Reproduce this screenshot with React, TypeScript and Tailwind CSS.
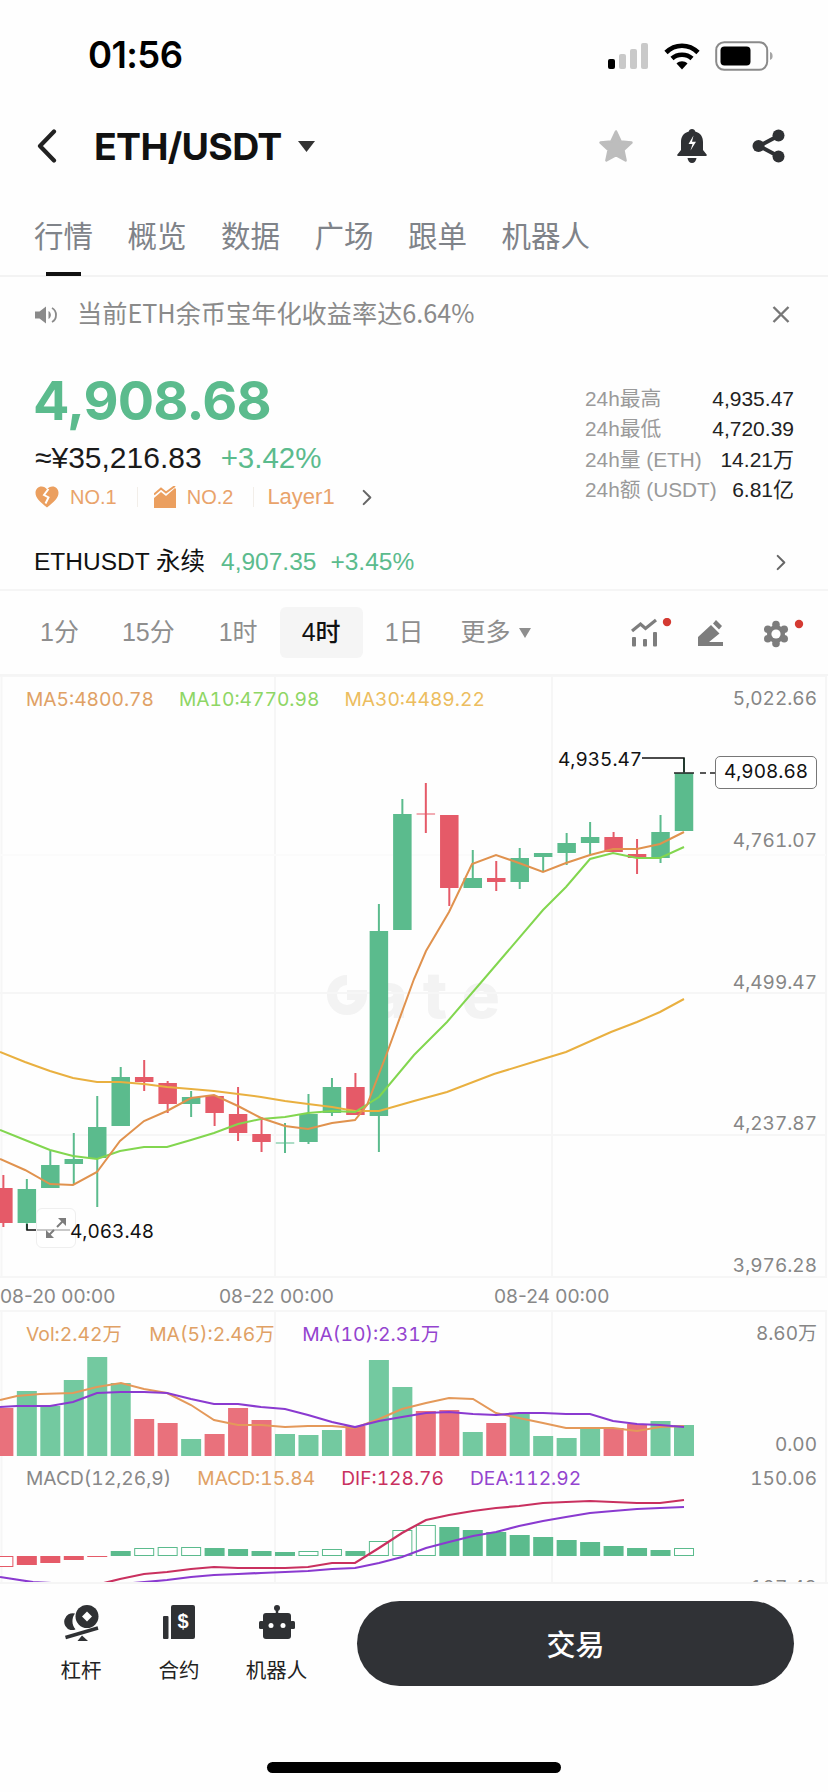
import React from "react";

const G = "#5bbb8d";
const R = "#e55a68";
const XS = (i: number) => 684 - 23.47 * i;

const candles: [number, number, number, number, number][] = [
  [1, 773, 831, 758, 831], [1, 832, 858, 815, 863], [0, 854, 858, 839, 874], [0, 837, 852, 832, 852],
  [1, 837, 843, 822, 855], [1, 843, 853, 833, 865], [1, 853, 857, 853, 872], [1, 858, 882, 848, 889],
  [0, 878, 882, 861, 891], [1, 878, 888, 850, 888], [0, 815, 888, 815, 906], [0, 813.5, 814.5, 783, 833],
  [1, 814, 930, 799, 930], [1, 931, 1116, 904, 1152], [0, 1087, 1115, 1073, 1115], [1, 1087, 1113, 1078, 1116],
  [1, 1114, 1142, 1094, 1144], [1, 1142.5, 1143.5, 1123, 1153], [0, 1134, 1142, 1117, 1152], [0, 1114, 1133, 1087, 1141],
  [0, 1096, 1113, 1096, 1126], [1, 1097, 1104, 1091, 1117], [0, 1083, 1104, 1081, 1113], [0, 1077, 1082, 1060, 1091],
  [1, 1077, 1126, 1067, 1126], [1, 1127, 1158, 1096, 1207], [1, 1159, 1164, 1133, 1184], [1, 1165, 1188, 1151, 1188],
  [1, 1189, 1223, 1179, 1230], [0, 1188, 1223, 1175, 1227],
];

const ma5 = "0,1159 25,1170 50,1184 73,1185 97,1172 120,1141 144,1121 167,1111 191,1098 214,1095 238,1106 261,1118 285,1126 308,1129 332,1123 355,1120 367,1105 387,1053 414,979 426,951 449,912 472,864 496,855 519,863 543,872 566,863 590,855 613,849 637,849 660,844 684,832";
const ma10 = "0,1130 25,1140 50,1150 73,1156 97,1159 120,1151 144,1147 167,1147 191,1140 214,1133 238,1124 261,1119 285,1117 308,1113 332,1111 355,1112 379,1097 414,1055 447,1022 484,979 543,910 566,887 590,859 613,853 637,858 660,858 684,847";
const ma30 = "0,1052 25,1062 50,1071 73,1078 97,1082 120,1082 144,1084 167,1087 191,1089 214,1091 238,1094 261,1097 285,1101 308,1104 332,1107 355,1111 379,1111 414,1101 447,1092 494,1074 543,1059 566,1052 611,1032 637,1022 660,1012 684,999";

const vol: [number, number][] = [
  [1, 1425], [1, 1421], [0, 1424], [0, 1428], [1, 1428], [1, 1438], [1, 1436], [1, 1414], [0, 1423], [1, 1432],
  [0, 1410], [0, 1411], [1, 1387], [1, 1360], [0, 1426], [1, 1430], [1, 1435], [1, 1434], [0, 1420], [0, 1408],
  [0, 1434], [1, 1439], [0, 1423], [0, 1419], [1, 1383], [1, 1357], [1, 1380], [1, 1406], [1, 1391], [0, 1408],
];
const volMa5 = "0,1400 17,1396 40,1394 73,1393 97,1387 121,1383 144,1389 167,1393 191,1405 214,1420 238,1425 261,1425 285,1427 308,1426 332,1426 355,1428 379,1419 402,1409 426,1403 449,1398 473,1399 496,1413 519,1418 543,1423 566,1428 590,1428 613,1428 637,1431 660,1427 684,1426";
const volMa10 = "0,1407 17,1406 50,1406 73,1402 97,1393 121,1392 144,1392 167,1393 191,1399 214,1404 238,1404 261,1407 285,1409 308,1415 332,1422 355,1427 379,1421 402,1417 426,1413 449,1412 473,1414 496,1415 519,1413 543,1413 566,1414 590,1414 613,1421 637,1424 660,1425 684,1427";

const macd: [number, number, boolean][] = [
  [1, 1548, true], [1, 1550, false], [1, 1548, false], [1, 1546, false], [1, 1542, false], [1, 1540, false],
  [1, 1537, false], [1, 1535, false], [1, 1532, false], [1, 1530, false], [1, 1527, false], [1, 1525, true],
  [1, 1530, true], [1, 1541, true], [1, 1551, false], [1, 1549, true], [1, 1551, true], [1, 1552, false],
  [1, 1551, false], [1, 1549, false], [1, 1548, false], [1, 1547, true], [1, 1547, true], [1, 1548, true],
  [1, 1551, false], [0, 1557, false], [0, 1560, false], [0, 1563, false], [0, 1565, false], [0, 1567, true],
];
const dif = "100,1584 120,1579 144,1574 167,1572 191,1569 214,1567 238,1568 261,1568 285,1568 308,1567 332,1563 355,1563 379,1548 402,1533 426,1520 449,1515 473,1511 496,1508 519,1506 543,1503 566,1502 590,1501 613,1502 637,1503 660,1503 684,1500";
const dea = "0,1577 33,1582 67,1584 97,1585 133,1583 167,1580 191,1577 214,1575 238,1574 261,1573 285,1572 308,1571 332,1569 355,1568 379,1563 402,1557 426,1548 449,1542 473,1536 496,1532 519,1526 543,1521 566,1517 590,1513 613,1511 637,1509 660,1508 684,1507";

const zh = "font-['Noto_Sans_CJK_SC','Noto_Sans',sans-serif]";
const num = "font-['Inter','Noto_Sans_CJK_SC',sans-serif] tabular-nums";

function Chevron({ className }: { className: string }) {
  return (
    <svg viewBox="0 0 12 18" className={className} fill="none" stroke="currentColor" strokeWidth="2.2" strokeLinecap="round" strokeLinejoin="round">
      <path d="M2.5 2 9.5 9 2.5 16" />
    </svg>
  );
}

function StatusBar() {
  return (
    <div className="flex h-[100px] items-start justify-between pt-[35px] pr-[55px] pl-[88px]">
      <span className="font-['Inter',sans-serif] text-[36.5px] leading-[40px] font-semibold tracking-[-0.6px] text-black">01:56</span>
      <div className="flex items-center pt-[6px]">
        <svg width="41" height="26" viewBox="0 0 41 26">
          <rect x="0" y="16" width="7" height="10" rx="2" fill="#000" />
          <rect x="11" y="11" width="7" height="15" rx="2" fill="#c9c9c9" />
          <rect x="22" y="6" width="7" height="20" rx="2" fill="#c9c9c9" />
          <rect x="33" y="0" width="7" height="26" rx="2" fill="#c9c9c9" />
        </svg>
        <svg width="36" height="28" viewBox="0 0 36 28" className="ml-[15px]">
          <path d="M2 10.5C11 1.5 25 1.5 34 10.5" fill="none" stroke="#000" strokeWidth="4.6" />
          <path d="M8 16.5C13.5 11.5 22.5 11.5 28 16.5" fill="none" stroke="#000" strokeWidth="4.6" />
          <path d="M12.5 21.5C15.5 18.4 20.5 18.4 23.5 21.5L18 27.5Z" fill="#000" />
        </svg>
        <svg width="58" height="30" viewBox="0 0 58 30" className="ml-[15px]">
          <rect x="1.2" y="1.2" width="51" height="27.6" rx="8" fill="none" stroke="#8a8a8a" strokeWidth="2" />
          <rect x="5.5" y="5.5" width="30" height="19" rx="4" fill="#000" />
          <path d="M55 11c2 .6 2.6 2.2 2.6 4s-.6 3.400-2.600 4z" fill="#a5a5a5" />
        </svg>
      </div>
    </div>
  );
}

function Header() {
  return (
    <div className="flex h-[92px] items-center justify-between pr-[43px] pl-[37px]">
      <div className="flex items-center">
        <svg width="20" height="34" viewBox="0 0 20 34" fill="none" stroke="#222" strokeWidth="4.2" strokeLinecap="round" strokeLinejoin="round">
          <path d="M17 2.500 3 17l14 14.500" />
        </svg>
        <span className="mt-[2px] ml-[37px] font-['Inter',sans-serif] text-[37.5px] leading-[42px] font-bold tracking-[-0.7px] text-[#111]">ETH/USDT</span>
        <svg width="17" height="11" viewBox="0 0 17 11" className="ml-[16px]"><path d="M0 0h17L8.500 11z" fill="#333" /></svg>
      </div>
      <div className="flex items-center">
        <svg width="36" height="34" viewBox="0 0 36 34">
          <path d="M18 2.500 22.600 12.400 33.500 13.600 25.400 21 27.600 31.500 18 26.200 8.400 31.500 10.600 21 2.500 13.600 13.400 12.400Z" fill="#bdbdbd" stroke="#bdbdbd" strokeWidth="2.500" strokeLinejoin="round" />
        </svg>
        <svg width="30" height="34" viewBox="0 0 30 34" className="ml-[43px]">
          <path d="M15 0c1.800 0 3 1.200 3.200 2.600C23.500 4 26 8 26 13v8l3.600 4.400c.5.800 0 1.600-.8 1.600H1.200c-.8 0-1.300-.8-.8-1.600L4 21v-8C4 8 6.500 4 11.800 2.600 12 1.200 13.200 0 15 0Z" fill="#2f3134" />
          <path d="M16.500 6.500 11.500 15h4l-2 6.500 5.500-8.800h-4l1.500-6.200Z" fill="#fff" />
          <path d="M10.500 29h9c-.4 3-2.200 5-4.500 5s-4.100-2-4.500-5Z" fill="#2f3134" />
        </svg>
        <svg width="33" height="34" viewBox="0 0 33 34" className="ml-[45px]">
          <path d="M26 7 7 17l19 10" fill="none" stroke="#2f3134" strokeWidth="4" />
          <circle cx="26.500" cy="6.500" r="6" fill="#2f3134" />
          <circle cx="6.500" cy="17" r="6" fill="#2f3134" />
          <circle cx="26.500" cy="27.500" r="6" fill="#2f3134" />
        </svg>
      </div>
    </div>
  );
}

function Tabs() {
  return (
    <div className={`relative flex h-[85px] gap-[34.5px] border-b-[2px] border-[#f3f3f3] pt-[21px] pl-[34px] ${zh} text-[29.500px] leading-[42px] text-[#7f8389]`}>
      {["行情", "概览", "数据", "广场", "跟单", "机器人"].map((t) => (
        <span key={t}>{t}</span>
      ))}
      <div className="absolute bottom-[-1px] left-[46px] h-[4px] w-[35px] bg-[#111]" />
    </div>
  );
}

function Notice() {
  return (
    <div className="flex h-[75px] items-center justify-between pr-[38px] pl-[35px]">
      <div className="flex items-center">
        <svg width="22" height="18" viewBox="0 0 22 18">
          <path d="M0 5.500h4.500L11 .5v17l-6.500-5H0z" fill="#8a8a8a" />
          <path d="M13.500 5c1.600 1 2.400 2.500 2.400 4s-.8 3-2.400 4z" fill="#8a8a8a" />
          <path d="M17 2c2.800 1.500 4 4 4 7s-1.200 5.500-4 7" fill="none" stroke="#8a8a8a" strokeWidth="1.800" />
        </svg>
        <span className={`ml-[20px] -mt-[5px] ${zh} text-[25.2px] leading-[32px] text-[#8a8a8a]`}>当前ETH余币宝年化收益率达6.64%</span>
      </div>
      <svg width="18" height="17" viewBox="0 0 18 17" fill="none" stroke="#777" strokeWidth="2.400"><path d="M1.500 1 16.500 16M16.500 1 1.500 16" /></svg>
    </div>
  );
}

function Stat({ label, value }: { label: string; value: string }) {
  return (
    <div className="flex h-[30.500px] items-center justify-between">
      <span className="font-['Liberation_Sans','Noto_Sans_CJK_SC',sans-serif] text-[20.800px] text-[#9a9a9a]">{label}</span>
      <span className="font-['Liberation_Sans','Noto_Sans_CJK_SC',sans-serif] text-[21px] text-[#222]">{value}</span>
    </div>
  );
}

function Price() {
  return (
    <div className="flex h-[164px] justify-between pr-[34px] pl-[35px]">
      <div className="flex flex-col">
        <div className="mt-[19px] -ml-[2px] font-['Inter',sans-serif] text-[54px] leading-[60px] font-bold tracking-[-0.8px] text-[#5bbb8d]">4,908.68</div>
        <div className="mt-[7px] flex items-center font-['Liberation_Sans',sans-serif] text-[30px] leading-[40px] font-medium text-[#1a1a1a]">
          <span>≈¥35,216.83</span>
          <span className="ml-[19px] text-[29.500px] text-[#5bbb8d]">+3.42%</span>
        </div>
        <div className="mt-[3px] flex items-center font-['Liberation_Sans',sans-serif] text-[20px] leading-[32px] text-[#e9a36b]">
          <svg width="24" height="22" viewBox="0 0 24 22">
            <path d="M12 21.500C5 16 .5 12 .5 6.800.5 3 3.200.5 6.500.5c2.300 0 4.300 1 5.500 3 1.200-2 3.200-3 5.500-3 3.300 0 6 2.500 6 6.300 0 5.200-4.500 9.200-11.500 14.700Z" fill="#eb9f5f" />
            <path d="M13.500 3 9 9l4.500 2.500-3 6" fill="none" stroke="#fff" strokeWidth="2" />
          </svg>
          <span className="ml-[11px]">NO.1</span>
          <span className="ml-[20px] h-[20px] w-[1px] bg-[#f2eee9]" />
          <svg width="22" height="22" viewBox="0 0 22 22" className="ml-[16px]">
            <path d="M0 12 7 6l5 4 9-8 1 1v19H0Z" fill="#eb9f5f" />
            <path d="M0 8.500 7 2.500l5 4L21 0" fill="none" stroke="#eb9f5f" strokeWidth="2" />
          </svg>
          <span className="ml-[11px]">NO.2</span>
          <span className="ml-[20px] h-[20px] w-[1px] bg-[#f2eee9]" />
          <span className="ml-[13px] text-[22px]">Layer1</span>
          <Chevron className="ml-[26px] h-[17px] w-[12px] text-[#666]" />
        </div>
      </div>
      <div className="mt-[31px] w-[209px]">
        <Stat label="24h最高" value="4,935.47" />
        <Stat label="24h最低" value="4,720.39" />
        <Stat label="24h量 (ETH)" value="14.21万" />
        <Stat label="24h额 (USDT)" value="6.81亿" />
      </div>
    </div>
  );
}

function Perp() {
  return (
    <div className="flex h-[75px] items-center justify-between border-b-[2px] border-[#f5f5f5] pt-[19px] pr-[41px] pl-[34px] font-['Liberation_Sans','Noto_Sans_CJK_SC',sans-serif] text-[24.500px]">
      <div className="flex items-center">
        <span className="text-[#111]">ETHUSDT 永续</span>
        <span className="ml-[16px] text-[#5bbb8d]">4,907.35</span>
        <span className="ml-[14px] text-[#5bbb8d]">+3.45%</span>
      </div>
      <Chevron className="h-[17px] w-[12px] text-[#666]" />
    </div>
  );
}

function Periods() {
  return (
    <div className="flex h-[85px] items-center justify-between border-b-[2px] border-[#f5f5f5] pr-[24px] pl-[40px] font-['Liberation_Sans','Noto_Sans_CJK_SC',sans-serif] text-[25px] text-[#8e8e8e]">
      <div className="flex items-center">
        <span>1分</span>
        <span className="ml-[43px]">15分</span>
        <span className="ml-[44px]">1时</span>
        <span className="ml-[22px] flex h-[51px] w-[83px] items-center justify-center rounded-[6px] bg-[#f5f5f5] font-medium text-[#111]">4时</span>
        <span className="ml-[22px]">1日</span>
        <span className="ml-[37px]">更多</span>
        <svg width="12" height="10" viewBox="0 0 12 10" className="ml-[8px]"><path d="M0 0h12L6 10z" fill="#8e8e8e" /></svg>
      </div>
      <div className="flex items-center">
        <svg width="41" height="30" viewBox="0 0 41 30">
          <g fill="#7d7d7d">
            <rect x="1" y="19" width="4" height="9.500" rx="1" />
            <rect x="12" y="21" width="4" height="7.500" rx="1" />
            <rect x="22" y="14" width="4" height="14.500" rx="1" />
          </g>
          <path d="M1 13 9.500 6 14.500 10.500 25 2" fill="none" stroke="#7d7d7d" strokeWidth="3.200" />
          <circle cx="36" cy="4" r="4.200" fill="#d43a32" />
        </svg>
        <svg width="26" height="26" viewBox="0 0 26 26" className="ml-[26px]">
          <path d="M0 17 13 5 21.500 13.500 11 22H25V26H0Z" fill="#7d7d7d" />
          <path d="M18 0 24 6 21 9.500 15 3.500Z" fill="#7d7d7d" />
        </svg>
        <svg width="41" height="30" viewBox="0 0 41 30" className="ml-[39px]">
          <g fill="#7d7d7d">
            <circle cx="13" cy="16" r="9" />
            <circle cx="13" cy="6.500" r="3.800" />
            <circle cx="13" cy="25.500" r="3.800" />
            <circle cx="4.800" cy="11.250" r="3.800" />
            <circle cx="21.200" cy="11.250" r="3.800" />
            <circle cx="4.800" cy="20.750" r="3.800" />
            <circle cx="21.200" cy="20.750" r="3.800" />
          </g>
          <circle cx="13" cy="16" r="4.600" fill="#fff" />
          <circle cx="36" cy="6" r="4.200" fill="#d43a32" />
        </svg>
      </div>
    </div>
  );
}

function Grid({ y1, y2, rows }: { y1: number; y2: number; rows: number[] }) {
  return (
    <g stroke="#f6f6f6" strokeWidth="2" fill="none">
      <path d={`M1.500 ${y1}V${y2}M275 ${y1}V${y2}M552 ${y1}V${y2}M826 ${y1}V${y2}`} />
      {rows.map((r) => (
        <path key={r} d={`M0 ${r}H826`} />
      ))}
    </g>
  );
}

function Axis({ top, children }: { top: number; children: string }) {
  return (
    <span className={`absolute right-[11px] ${num} text-[19px] leading-[24px] text-[#868686]`} style={{ top }}>
      {children}
    </span>
  );
}

function MainChart() {
  const top = 676;
  return (
    <div className="relative h-[634px] w-full">
      <div className="absolute top-[299px] left-[327px] flex items-center font-['Inter',sans-serif] text-[64px] leading-[40px] font-extrabold tracking-[15px] text-[#f3f3f3]">
        <svg width="40" height="40" viewBox="0 0 40 40">
          <path d="M20 5A15 15 0 1 0 35 20H20" fill="none" stroke="#f3f3f3" strokeWidth="10" />
        </svg>
        <span className="ml-[3px]">ate</span>
      </div>
      <svg width="828" height="634" viewBox={`0 ${top} 828 634`} className="absolute inset-0">
        <Grid y1={676} y2={1278} rows={[676, 993, 1135, 1277]} />
        <path d="M0 855H826" stroke="#fbfbfb" strokeWidth="2" />
        {candles.map(([g, t, b, wt, wb], i) => {
          const x = XS(i);
          const c = g ? G : R;
          return (
            <g key={i}>
              <line x1={x} x2={x} y1={wt} y2={wb} stroke={c} strokeWidth="2" />
              <rect x={x - 9.250} y={t} width="18.500" height={Math.max(b - t, 1)} fill={c} />
            </g>
          );
        })}
        <polyline points={ma30} fill="none" stroke="#e9b040" strokeWidth="2" />
        <polyline points={ma10} fill="none" stroke="#82d64f" strokeWidth="2" />
        <polyline points={ma5} fill="none" stroke="#e0924e" strokeWidth="2" />
        <path d="M642 758H684V772" fill="none" stroke="#111" strokeWidth="1.500" />
        <path d="M674 773H694M700 773H706M710 773H715" fill="none" stroke="#222" strokeWidth="1.500" />
        <path d="M27 1224V1230H70" fill="none" stroke="#111" strokeWidth="1.500" />
      </svg>

      <div className={`absolute top-[11px] left-[26px] flex gap-[25px] ${num} text-[19.200px] leading-[24px]`}>
        <span className="text-[#e0a165]">MA5:4800.78</span>
        <span className="text-[#8ed665]">MA10:4770.98</span>
        <span className="text-[#ecbd5f]">MA30:4489.22</span>
      </div>

      <Axis top={11}>5,022.66</Axis>
      <Axis top={153}>4,761.07</Axis>
      <Axis top={295}>4,499.47</Axis>
      <Axis top={436}>4,237.87</Axis>
      <Axis top={578}>3,976.28</Axis>

      <span className={`absolute top-[72px] left-[558px] ${num} text-[19px] leading-[24px] text-[#111]`}>4,935.47</span>
      <span className={`absolute top-[80px] left-[715px] flex h-[33px] w-[102px] items-center justify-center rounded-[5px] border border-[#777] bg-white ${num} text-[19px] text-[#111]`}>4,908.68</span>

      <div className="absolute top-[532px] left-[36px] flex h-[40px] w-[40px] items-center justify-center rounded-[6px] border border-[#efefef] bg-white/70">
        <svg width="22" height="22" viewBox="0 0 22 22" fill="#7d7d7d">
          <path d="M12 10 19 3M2 20l7-7" stroke="#7d7d7d" strokeWidth="2" />
          <path d="M13 1h8v8zM1 13v8h8z" />
        </svg>
      </div>
      <span className={`absolute top-[544px] left-[70px] ${num} text-[19px] leading-[24px] text-[#111]`}>4,063.48</span>

      <div className="absolute top-[608px] left-0 w-full font-['Inter',sans-serif] text-[19.2px] leading-[24px] text-[#888]">
        <span className="absolute left-0">08-20 00:00</span>
        <span className="absolute left-[219px]">08-22 00:00</span>
        <span className="absolute left-[494px]">08-24 00:00</span>
      </div>
    </div>
  );
}

function VolChart() {
  return (
    <div className="relative h-[148px] w-full">
      <svg width="828" height="148" viewBox="0 1310 828 148" className="absolute inset-0">
        <Grid y1={1310} y2={1458} rows={[1311]} />
        {vol.map(([g, t], i) => (
          <rect key={i} x={XS(i) - 10} y={t} width="20" height={1456 - t} fill={g ? "#73c9a0" : "#e9717c"} />
        ))}
        <polyline points={volMa5} fill="none" stroke="#e4995a" strokeWidth="2" />
        <polyline points={volMa10} fill="none" stroke="#8a3ad0" strokeWidth="2.200" />
      </svg>
      <div className={`absolute top-[12px] left-[26px] flex gap-[27.5px] ${num} text-[19.300px] leading-[24px]`}>
        <span className="text-[#e0a165]">Vol:2.42万</span>
        <span className="text-[#e0a165]">MA(5):2.46万</span>
        <span className="text-[#9444cf]">MA(10):2.31万</span>
      </div>
      <Axis top={12}>8.60万</Axis>
      <Axis top={123}>0.00</Axis>
    </div>
  );
}

function MacdChart() {
  return (
    <div className="relative h-[126px] w-full overflow-hidden border-b-[2px] border-[#f5f5f5]">
      <svg width="828" height="126" viewBox="0 1458 828 126" className="absolute inset-0">
        <Grid y1={1458} y2={1584} rows={[]} />
        {macd.map(([g, t, hollow], i) => {
          const x = XS(i) - 10;
          const y = g ? t : 1556;
          const h = Math.max(Math.abs(1556 - t), 1);
          const c = g ? "#5bbb8d" : "#e55a68";
          return hollow ? (
            <rect key={i} x={x + 0.5} y={y + 0.5} width="19" height={h - 1} fill="#fff" stroke={c} strokeWidth="1" />
          ) : (
            <rect key={i} x={x} y={y} width="20" height={h} fill={c} />
          );
        })}
        <polyline points={dif} fill="none" stroke="#c9305f" strokeWidth="2.200" />
        <polyline points={dea} fill="none" stroke="#8a3ad0" strokeWidth="2.200" />
      </svg>
      <div className={`absolute top-[8px] left-[26px] flex gap-[26px] ${num} text-[19.200px] leading-[24px]`}>
        <span className="text-[#888]">MACD(12,26,9)</span>
        <span className="text-[#e0a165]">MACD:15.84</span>
        <span className="text-[#c9305f]">DIF:128.76</span>
        <span className="text-[#9444cf]">DEA:112.92</span>
      </div>
      <Axis top={9}>150.06</Axis>
      <Axis top={118}>107.43</Axis>
    </div>
  );
}

function FooterItem({ label, width, children }: { label: string; width: number; children: React.ReactNode }) {
  return (
    <div className="flex flex-col items-center" style={{ width }}>
      <div className="flex h-[38px] items-center">{children}</div>
      <span className={`mt-[13px] whitespace-nowrap ${zh} text-[20.500px] leading-[30px] text-[#222]`}>{label}</span>
    </div>
  );
}

function Footer() {
  return (
    <div className="flex h-[118px] items-start pt-[17px] pr-[34px] pl-[61px]">
      <div className="flex pt-[2px]">
        <FooterItem label="杠杆" width={40}>
          <svg width="37" height="37" viewBox="0 0 37 37">
            <path d="M12 9.500a8.500 8.500 0 0 0-4.500 16.500c1 .2 3.500.2 5-.8C8.500 21 8.500 14 12 9.500Z" fill="#2f3134" />
            <circle cx="24" cy="12.500" r="11.500" fill="#2f3134" />
            <path d="M24 7.500 29 12.500 24 17.500 19 12.500Z" fill="#fff" />
            <path d="M2.500 33.500 35 24" stroke="#2f3134" strokeWidth="3.400" />
            <path d="M19 31.500 25 37H14.500Z" fill="#2f3134" />
          </svg>
        </FooterItem>
        <div className="ml-[57px]">
          <FooterItem label="合约" width={42}>
            <svg width="32" height="34" viewBox="0 0 32 34">
              <rect x="0" y="11" width="5.500" height="23" rx="1" fill="#2f3134" />
              <path d="M8 2a2 2 0 0 1 2-2h20a2 2 0 0 1 2 2v30a2 2 0 0 1-2 2H8Z" fill="#2f3134" />
              <text x="20" y="23" textAnchor="middle" fontFamily="Liberation Sans" fontWeight="700" fontSize="20" fill="#fff">$</text>
            </svg>
          </FooterItem>
        </div>
        <div className="ml-[45px]">
          <FooterItem label="机器人" width={63}>
            <svg width="36" height="34" viewBox="0 0 36 34">
              <circle cx="18" cy="3" r="3" fill="#2f3134" />
              <rect x="16.750" y="3" width="2.500" height="6" fill="#2f3134" />
              <rect x="4" y="8" width="28" height="26" rx="3" fill="#2f3134" />
              <rect x="0" y="16" width="5" height="8" rx="1.500" fill="#2f3134" />
              <rect x="31" y="16" width="5" height="8" rx="1.500" fill="#2f3134" />
              <circle cx="12" cy="20.500" r="2.500" fill="#fff" />
              <circle cx="24" cy="20.500" r="2.500" fill="#fff" />
            </svg>
          </FooterItem>
        </div>
      </div>
      <div className={`ml-[49px] flex h-[85px] w-[438px] items-center justify-center rounded-full bg-[#303236] ${zh} text-[29px] font-medium text-white`}>
        交易
      </div>
    </div>
  );
}

export default function App() {
  return (
    <div className="h-[1792px] w-[828px] overflow-hidden bg-[#fefefe]">
      <StatusBar />
      <Header />
      <Tabs />
      <Notice />
      <Price />
      <Perp />
      <Periods />
      <MainChart />
      <VolChart />
      <MacdChart />
      <Footer />
      <div className="flex justify-center pt-[60px]">
        <div className="h-[11px] w-[294px] rounded-full bg-black" />
      </div>
    </div>
  );
}
